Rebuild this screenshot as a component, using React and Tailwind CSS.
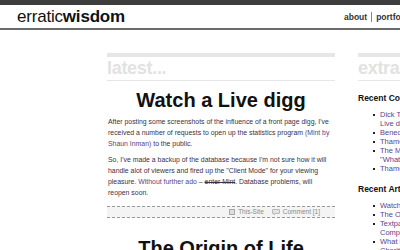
import React from 'react';

const font = { fontFamily: '"Liberation Sans", Arial, sans-serif' };

function SideList({ title, items }) {
  return (
    <div className="mb-[10px]">
      <h3 className="text-[8.5px] font-bold text-[#111] leading-[12px] mb-[6px]">{title}</h3>
      <ul className="pl-[22px] text-[7.5px] leading-[9px] text-[#5e3f8c]">
        {items.map((item, i) => (
          <li key={i} className="flex whitespace-nowrap">
            <span className="mt-[3.5px] ml-[-7px] mr-[5px] w-[2px] h-[2px] shrink-0 bg-[#222]" />
            <span>
              {item.map((line, j) => (
                <div key={j}>{line}</div>
              ))}
            </span>
          </li>
        ))}
      </ul>
    </div>
  );
}

export default function App() {
  return (
    <div className="w-[400px] h-[250px] overflow-hidden bg-white" style={font}>
      {/* top strip + header */}
      <div className="h-[5px] bg-[#3d3d3d]" />
      <header className="h-[25px] flex items-center border-b-2 border-[#6b6b6b] whitespace-nowrap">
        <div className="w-[344px] shrink-0 pl-[17px] text-[17px] leading-none text-[#111] tracking-[-0.2px]">
          erratic<span className="font-bold">wisdom</span>
        </div>
        <nav className="flex items-center text-[8.5px] font-bold text-[#333] pt-[1px]">
          <a>about</a>
          <span className="mx-[4px] w-px h-[10px] bg-[#888]" />
          <a>portfolio</a>
        </nav>
      </header>

      <div className="flex gap-[23px] pl-[107px] pt-[23px]">
        {/* main column */}
        <main className="w-[228px] shrink-0">
          <div className="h-[4px] bg-[#e6e6e6]" />
          <h2 className="text-[18px] font-bold leading-[23px] text-[#e2e2e2] border-b border-[#e6e6e6] tracking-[-0.3px]">
            latest...
          </h2>

          <article>
            <h1 className="mt-[7px] text-[20px] font-bold leading-[24px] text-center text-[#111]">
              Watch a Live digg
            </h1>
            <div className="mt-[4px] px-[1px] text-[6.9px] leading-[11px] text-[#3b2f47]">
              <p>
                After posting some screenshots of the influence of a front page digg, I've
                received a number of requests to open up the statistics program <a className="text-[#5a3f82]">(Mint by
                Shaun Inman)</a> to the public.
              </p>
              <p className="mt-[5px]">
                So, I've made a backup of the database because I'm not sure how it will
                handle alot of viewers and fired up the "Client Mode" for your viewing
                pleasure. <a className="text-[#5a3f82]">Without further ado</a> – <s>enter Mint</s>. Database problems, will
                reopen soon.
              </p>
            </div>
            <div className="mt-[8px] h-[12px] border-y border-dashed border-[#999] bg-[#f4f4f4] flex items-center justify-end gap-[8px] pr-[15px] text-[6.5px] text-[#8a8a8a]">
              <span className="flex items-center gap-[3px]">
                <svg width="6" height="6" viewBox="0 0 6 6">
                  <rect x="0.5" y="0.5" width="5" height="5" fill="#ddd" stroke="#aaa" strokeWidth="1" />
                </svg>
                This-Site
              </span>
              <span className="flex items-center gap-[3px]">
                <svg width="8" height="6" viewBox="0 0 8 6">
                  <path d="M1 0.5h6a0.5 0.5 0 0 1 .5.5v3a0.5 0.5 0 0 1-.5.5H3.5L2 5.8V4.5H1A0.5 0.5 0 0 1 .5 4V1A0.5 0.5 0 0 1 1 .5z" fill="#e4e4e4" stroke="#aaa" strokeWidth="0.8" />
                </svg>
                Comment [1]
              </span>
            </div>
          </article>

          <h1 className="mt-[18px] text-[20px] font-bold leading-[24px] text-center text-[#111]">
            The Origin of Life
          </h1>
        </main>

        {/* sidebar */}
        <aside className="w-[160px] shrink-0">
          <div className="h-[4px] bg-[#e6e6e6]" />
          <h2 className="text-[18px] font-bold leading-[23px] text-[#e2e2e2] border-b border-[#e6e6e6] tracking-[-0.3px]">
            extra...
          </h2>
          <div className="mt-[11px]">
            <SideList
              title="Recent Comments"
              items={[
                ['Dick Thomas on Watch a', 'Live digg'],
                ['Benedict on Watch a Live digg'],
                ['Thame on The Origin of Life'],
                ['The Man in Blue on', '"What is Textpattern?"'],
                ['Thame on Watch a Live digg'],
              ]}
            />
            <SideList
              title="Recent Articles"
              items={[
                ['Watch a Live digg'],
                ['The Origin of Life'],
                ['Textpattern vs. WordPress:', 'Comparison'],
                ['What is Textpattern?'],
                ['Charity Begins at Home'],
              ]}
            />
          </div>
        </aside>
      </div>
    </div>
  );
}
